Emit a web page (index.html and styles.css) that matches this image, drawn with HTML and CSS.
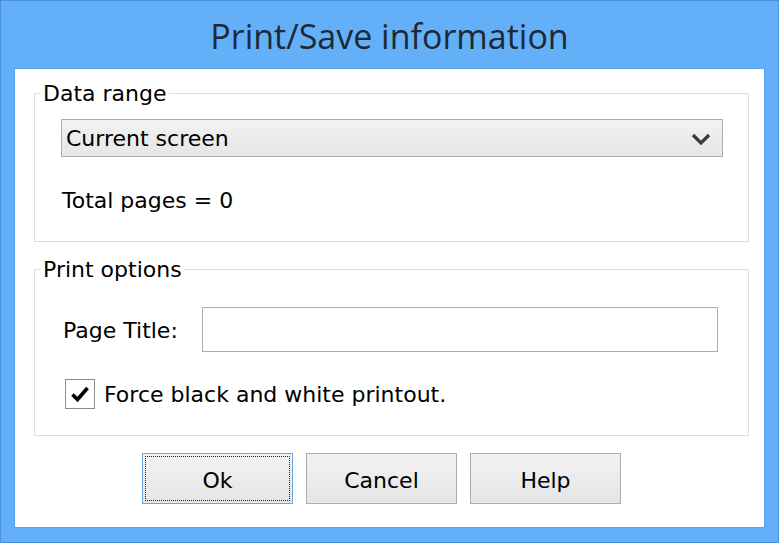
FILE: index.html
```html
<!DOCTYPE html>
<html lang="en">
<head>
<meta charset="UTF-8" />
<title>Print/Save information</title>
<link rel="stylesheet" href="styles.css">
</head>
<body>
<div class="window">
  <div class="titlebar">Print/Save information</div>
  <div class="client">
    <fieldset class="group">
      <legend>Data range</legend>
      <div class="group-body range">
        <div class="select">
          <span>Current screen</span>
          <svg class="chevron" width="20" height="12" viewBox="0 0 20 12">
            <path d="M2 2 L10 10 L18 2" fill="none" stroke="#3c3c3c" stroke-width="3.2" />
          </svg>
        </div>
        <p class="pages">Total pages = 0</p>
      </div>
    </fieldset>

    <fieldset class="group options">
      <legend>Print options</legend>
      <div class="group-body">
        <div class="field">
          <label>Page Title:</label>
          <div class="input"></div>
        </div>
        <div class="check">
          <span class="box">
            <svg width="22" height="22" viewBox="0 0 22 22">
              <path d="M3.5 11.5 L8.5 16.5 L18.5 5" fill="none" stroke="#000" stroke-width="3.6" />
            </svg>
          </span>
          <span>Force black and white printout.</span>
        </div>
      </div>
    </fieldset>

    <div class="buttons">
      <button class="btn default">Ok</button>
      <button class="btn">Cancel</button>
      <button class="btn">Help</button>
    </div>
  </div>
</div>
</body>
</html>
```

FILE: styles.css
```css
:root {
  --frame-blue: #63b0f9;
  --frame-edge: #4a8fd8;
  --group-line: #dedede;
  --ctl-border: #adadad;
}
body {
  margin: 0;
  background: var(--frame-blue);
  font-family: "DejaVu Sans", Verdana, sans-serif;
  font-size: 22px;
  color: #000;
}
.window {
  width: 779px;
  height: 543px;
  box-sizing: border-box;
  border: 1px solid var(--frame-edge);
  background: var(--frame-blue);
}
.titlebar {
  height: 67px;
  box-sizing: border-box;
  padding-top: 15px;
  text-align: center;
  font-family: "Open Sans", "Noto Sans", sans-serif;
  font-size: 34px;
  line-height: 40px;
  color: #1d2935;
}
.client {
  margin: 0 13px;
  height: 460px;
  box-sizing: border-box;
  border: 1px solid #58a2ec;
  background: #fff;
  padding: 12px 15px 0 19px;
}
.group {
  margin: 0;
  padding: 0 6px;
  border: 1px solid var(--group-line);
  min-width: 0;
}
.group legend {
  padding: 0 2px;
  line-height: 25px;
}
.group-body {
  padding: 0 19px 28px 20px;
}
.options {
  margin-top: 15px;
}
.options .group-body {
  padding-bottom: 26px;
}
.select {
  margin-top: 13px;
  height: 38px;
  box-sizing: border-box;
  border: 1px solid var(--ctl-border);
  background: linear-gradient(#f2f2f2, #e6e6e6);
  display: flex;
  align-items: center;
  justify-content: space-between;
  padding: 1px 11px 0 4px;
}
.chevron {
  display: block;
}
.pages {
  margin: 32px 0 0 1px;
  line-height: 24px;
}
.field {
  margin-top: 25px;
  display: flex;
  align-items: center;
}
.field label {
  width: 139px;
  margin-left: 2px;
  padding-top: 2px;
}
.input {
  width: 516px;
  height: 45px;
  box-sizing: border-box;
  border: 1px solid var(--ctl-border);
  background: #fff;
}
.check {
  margin: 27px 0 0 4px;
  display: flex;
  align-items: center;
  gap: 9px;
}
.box {
  width: 30px;
  height: 30px;
  box-sizing: border-box;
  border: 1px solid #8c8c8c;
  background: #fff;
  display: flex;
  align-items: center;
  justify-content: center;
}
.box svg {
  display: block;
}
.buttons {
  margin-top: 17px;
  padding-left: 108px;
  display: flex;
  gap: 13px;
}
.btn {
  width: 151px;
  height: 51px;
  border: 1px solid var(--ctl-border);
  background: linear-gradient(#f2f2f2, #e5e5e5);
  font-family: "DejaVu Sans", Verdana, sans-serif;
  font-size: 22px;
  color: #000;
  padding: 3px 0 0;
}
.btn.default {
  border-color: #6fa6dc;
  outline: 1px dotted #222;
  outline-offset: -4px;
}
```
